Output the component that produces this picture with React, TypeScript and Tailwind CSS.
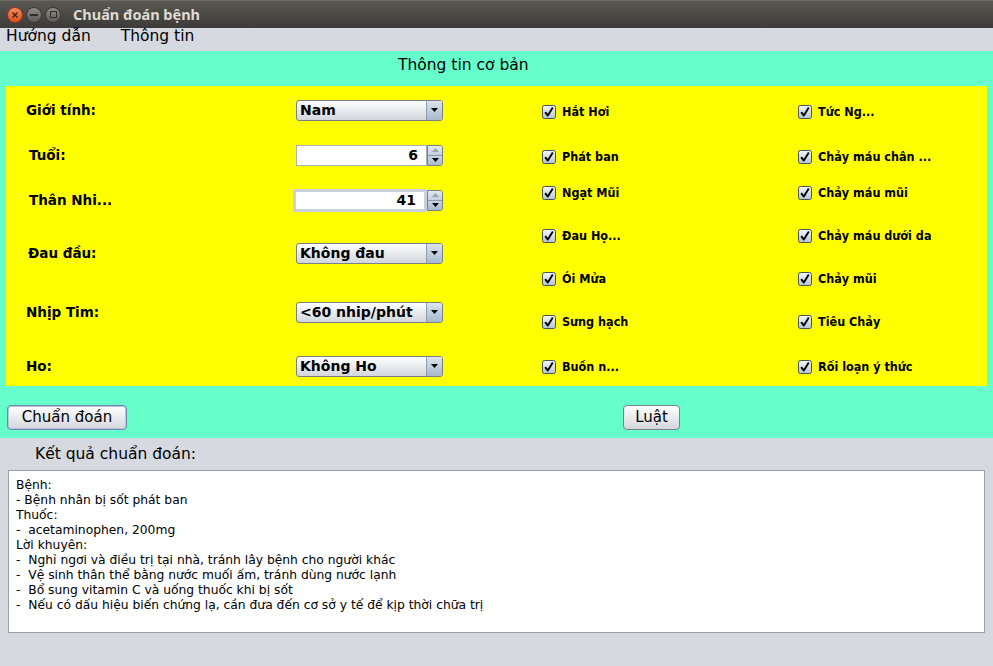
import React from "react";

const F = "font-['DejaVu_Sans',sans-serif]";
const FC = "font-['DejaVu_Sans_Condensed','DejaVu_Sans',sans-serif] [font-stretch:condensed]";

function Check() {
  return (
    <svg width="14" height="14" viewBox="0 0 14 14" className="shrink-0">
      <defs>
        <linearGradient id="cbg" x1="0" y1="0" x2="0" y2="1">
          <stop offset="0" stopColor="#f5f8fb" />
          <stop offset="1" stopColor="#b4c3d4" />
        </linearGradient>
      </defs>
      <rect x="0.5" y="0.5" width="13" height="13" rx="2" fill="url(#cbg)" stroke="#4a525c" />
      <path d="M3.2 7.2 L5.8 10.6 L10.8 2.4" stroke="#000" strokeWidth="1.9" fill="none" strokeLinejoin="round" />
    </svg>
  );
}

function DownTri({ color = "#000" }: { color?: string }) {
  return (
    <svg width="7" height="4" viewBox="0 0 7 4">
      <path d="M0 0 H7 L3.5 4 Z" fill={color} />
    </svg>
  );
}
function UpTri({ color = "#000" }: { color?: string }) {
  return (
    <svg width="7" height="4" viewBox="0 0 7 4">
      <path d="M0 4 H7 L3.5 0 Z" fill={color} />
    </svg>
  );
}

function Combo({ text }: { text: string }) {
  return (
    <div className="w-[147px] h-[21px] flex rounded-[3px] border border-[#7a8089] bg-linear-to-b from-white to-[#d2d6dc] overflow-hidden">
      <div className={`flex-1 pl-[3px] flex items-center font-bold text-[14px] text-black ${F}`}>{text}</div>
      <div className="w-[16px] border-l border-[#8e9aa8] bg-linear-to-b from-[#dce4ee] to-[#a6b9cd] flex items-center justify-center">
        <DownTri />
      </div>
    </div>
  );
}

function Spinner({ value, focused }: { value: string; focused?: boolean }) {
  return (
    <div className="w-[147px] h-[21px] flex">
      <div
        className={`flex-1 bg-white flex items-center justify-end pr-[8px] font-bold text-[14px] text-black ${F} ${
          focused ? "border-[3px] border-[#c9d1dc] -ml-[3px] h-[23px] self-center" : "border border-[#aab0b8]"
        }`}
      >
        {value}
      </div>
      <div className="w-[16px] flex flex-col border border-[#7a8089] rounded-r-[3px] overflow-hidden">
        <div className="flex-1 bg-linear-to-b from-[#e4eaf1] to-[#c3d0de] flex items-center justify-center border-b border-[#8e9aa8]">
          <UpTri color="#9aa3ad" />
        </div>
        <div className="flex-1 bg-linear-to-b from-[#c9d5e2] to-[#a6b9cd] flex items-center justify-center">
          <DownTri />
        </div>
      </div>
    </div>
  );
}

function Cb({ label, mt }: { label: string; mt: string }) {
  return (
    <div className={`h-[20px] flex items-center ${mt}`}>
      <Check />
      <span className={`ml-[6px] font-bold text-[12.5px] text-black whitespace-nowrap ${FC}`}>{label}</span>
    </div>
  );
}

export default function App() {
  const leftRows: { label: string; pl: string; mt: string; ctrl: React.ReactNode }[] = [
    { label: "Giới tính:", pl: "pl-[20px]", mt: "mt-0", ctrl: <Combo text="Nam" /> },
    { label: "Tuổi:", pl: "pl-[23px]", mt: "mt-[25px]", ctrl: <Spinner value="6" /> },
    { label: "Thân Nhi...", pl: "pl-[23px]", mt: "mt-[25px]", ctrl: <Spinner value="41" focused /> },
    { label: "Đau đầu:", pl: "pl-[22px]", mt: "mt-[33px]", ctrl: <Combo text="Không đau" /> },
    { label: "Nhịp Tim:", pl: "pl-[20px]", mt: "mt-[39px]", ctrl: <Combo text="<60 nhip/phút" /> },
    { label: "Ho:", pl: "pl-[20px]", mt: "mt-[34px]", ctrl: <Combo text="Không Ho" /> },
  ];
  const col1 = ["Hắt Hơi", "Phát ban", "Ngạt Mũi", "Đau Họ...", "Ói Mửa", "Sưng hạch", "Buồn n..."];
  const col2 = ["Tức Ng...", "Chảy máu chân ...", "Chảy máu mũi", "Chảy máu dưới da", "Chảy mũi", "Tiêu Chảy", "Rối loạn ý thức"];
  const mts = ["mt-0", "mt-[25px]", "mt-[16px]", "mt-[23px]", "mt-[23px]", "mt-[23px]", "mt-[25px]"];

  const lines = [
    "Bệnh:",
    "- Bệnh nhân bị sốt phát ban",
    "Thuốc:",
    "-  acetaminophen, 200mg",
    "Lời khuyên:",
    "-  Nghỉ ngơi và điều trị tại nhà, tránh lây bệnh cho người khác",
    "-  Vệ sinh thân thể bằng nước muối ấm, tránh dùng nước lạnh",
    "-  Bổ sung vitamin C và uống thuốc khi bị sốt",
    "-  Nếu có dấu hiệu biến chứng lạ, cần đưa đến cơ sở y tế để kịp thời chữa trị",
  ];

  return (
    <div className={`w-[993px] h-[666px] bg-[#d6d9e0] flex flex-col overflow-hidden ${F}`}>
      {/* Title bar */}
      <div className="h-[28px] shrink-0 bg-linear-to-b from-[#5a5852] to-[#3c3b37] border-t border-[#6b6962] flex items-center">
        <div className="ml-[7px] w-[16px] h-[16px] rounded-full bg-linear-to-b from-[#f58a5c] to-[#df4d1c] border border-[#9c3a17] flex items-center justify-center">
          <svg width="8" height="8" viewBox="0 0 8 8">
            <path d="M1.5 1.5 L6.5 6.5 M6.5 1.5 L1.5 6.5" stroke="#3a2620" strokeWidth="1.4" />
          </svg>
        </div>
        <div className="ml-[3px] w-[16px] h-[16px] rounded-full bg-linear-to-b from-[#8d8b84] to-[#5e5c56] border border-[#3a3935] flex items-center justify-center">
          <div className="w-[8px] h-[2px] bg-[#2e2d2a]" />
        </div>
        <div className="ml-[3px] w-[16px] h-[16px] rounded-full bg-linear-to-b from-[#8d8b84] to-[#5e5c56] border border-[#3a3935] flex items-center justify-center">
          <div className="w-[7px] h-[7px] border-[1.5px] border-[#2e2d2a]" />
        </div>
        <div className="ml-[12px] text-[14.5px] font-bold text-[#dfdbd2] font-['Noto_Sans',sans-serif] leading-none">
          Chuẩn đoán bệnh
        </div>
      </div>

      {/* Menu bar */}
      <div className="h-[23px] shrink-0 flex items-start pt-[1px] text-[15.5px] leading-[15px] text-black">
        <span className="ml-[6px]">Hướng dẫn</span>
        <span className="ml-[30px]">Thông tin</span>
      </div>

      {/* Cyan panel */}
      <div className="h-[387px] shrink-0 bg-[#66ffcc] flex flex-col">
        <div className="h-[35px] shrink-0 pl-[398px] pt-[4px] text-[15.5px] leading-[20px] text-black">Thông tin cơ bản</div>
        <div className="mx-[6px] h-[300px] shrink-0 bg-[#ffff00] flex">
          <div className="w-[536px] shrink-0 flex flex-col pt-[14px]">
            {leftRows.map((r) => (
              <div key={r.label} className={`h-[20px] flex items-center ${r.mt}`}>
                <div className={`w-[290px] shrink-0 ${r.pl} font-bold text-[13.5px] text-black ${F}`}>{r.label}</div>
                {r.ctrl}
              </div>
            ))}
          </div>
          <div className="w-[256px] shrink-0 flex flex-col pt-[16px]">
            {col1.map((l, i) => (
              <Cb key={l} label={l} mt={mts[i]} />
            ))}
          </div>
          <div className="flex-1 flex flex-col pt-[16px]">
            {col2.map((l, i) => (
              <Cb key={l} label={l} mt={mts[i]} />
            ))}
          </div>
        </div>
        <div className="flex items-start pt-[19px] pl-[7px]">
          <button className="w-[120px] h-[25px] rounded-[4px] border border-[#7082ad] bg-linear-to-b from-white to-[#d3d7dd] text-[15px] text-black flex items-center justify-center shadow-[inset_0_0_0_1px_#b9c6e0]">
            Chuẩn đoán
          </button>
          <button className="ml-[496px] w-[57px] h-[25px] rounded-[4px] border border-[#7a8089] bg-linear-to-b from-white to-[#d3d7dd] text-[15px] text-black flex items-center justify-center">
            Luật
          </button>
        </div>
      </div>

      {/* Result */}
      <div className="pt-[6px] pl-[35px] text-[15.5px] leading-[20px] text-black">Kết quả chuẩn đoán:</div>
      <div className="mt-[6px] ml-[8px] w-[977px] h-[163px] bg-white border border-[#9b9fa7] pt-[7px] pl-[7px] text-[12.3px] leading-[15px] text-black">
        {lines.map((l) => (
          <div key={l} className="whitespace-pre">
            {l}
          </div>
        ))}
      </div>
    </div>
  );
}
